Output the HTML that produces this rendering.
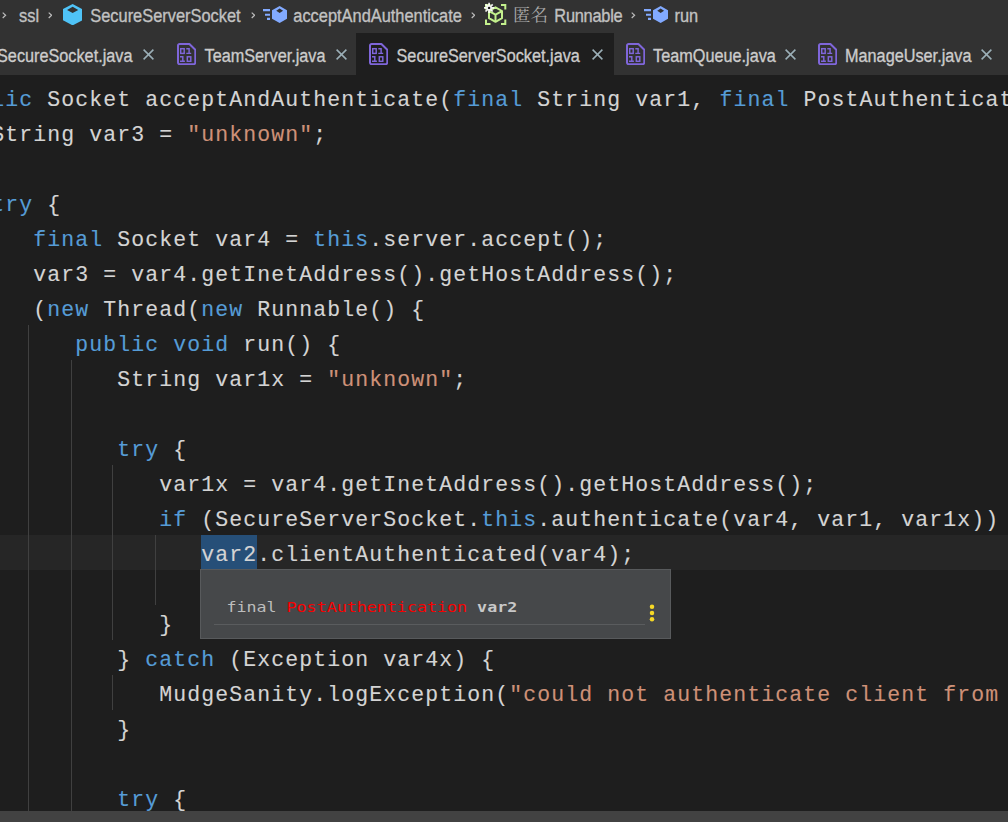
<!DOCTYPE html>
<html lang="zh"><head><meta charset="utf-8"><title>SecureServerSocket.java</title>
<style>
html,body{margin:0;padding:0;background:#1e1e1e;}
body{width:1008px;height:822px;position:relative;overflow:hidden;font-family:"Liberation Sans","Noto Sans CJK SC",sans-serif;}
#top{position:absolute;left:0;top:0;width:1008px;height:75px;background:#323232;}
#active{position:absolute;left:356px;top:33px;width:258px;height:42px;background:#1e1e1e;}
.bt{-webkit-text-stroke:0.3px #c2c2c2;position:absolute;top:0px;height:33px;line-height:32px;font-size:16.4px;color:#c2c2c2;white-space:nowrap;transform:scaleY(1.1);transform-origin:0 21.5px;}
.cj{transform:none;-webkit-text-stroke:0;top:-1.3px;font-family:"Liberation Serif","Noto Serif CJK SC",serif;font-size:17.5px;color:#a9a9a9;}
.bi{position:absolute;}
.tt{-webkit-text-stroke:0.3px #cccccc;position:absolute;top:33.9px;height:42px;line-height:45px;font-size:16.25px;color:#cccccc;white-space:nowrap;transform:scaleY(1.1);transform-origin:0 28.5px;}
.fi{position:absolute;top:43.2px;}
.cx{position:absolute;top:49px;}
#ed{position:absolute;left:0;top:75px;width:1008px;height:736px;overflow:hidden;}
#cur{position:absolute;left:0;top:535px;width:1008px;height:35px;background:#262626;}
.ln{position:absolute;height:35px;line-height:35px;white-space:pre;color:#d4d4d4;font-family:"Liberation Mono",monospace;font-size:21.5px;letter-spacing:1.098px;-webkit-text-stroke:0.12px;}
.k{color:#569cd6;}
.s{color:#ce9178;}
#sel{position:absolute;left:201px;top:535px;width:56px;height:34px;background:#264f78;}
.g{position:absolute;width:1px;background:#404040;}
#sb{position:absolute;left:0;top:811px;width:1008px;height:11px;background:#424242;}
#pop{position:absolute;left:200px;top:569px;width:469px;height:67.5px;background:#46484a;border:1px solid #585a5c;}
#pop .tx{position:absolute;left:25.4px;top:25px;line-height:24px;font-family:"DejaVu Sans Mono",monospace;font-size:16.67px;white-space:pre;color:#bdbdbd;transform:scaleY(0.852);transform-origin:0 17.3px;}
#pop .r{color:#f80000;}
#pop b{color:#c8c8c8;}
#pop .hr{position:absolute;left:13px;top:54px;width:431px;height:1px;background:#5a5c5e;}
#pop .dots{position:absolute;left:447.5px;top:33.5px;}
</style></head><body>
<div id="top"><div id="active"></div>
<svg class="bi" style="left:2px;top:12.300px" width="4.500" height="6.600" viewBox="0 0 4.500 6.600"><path d="M0.700 0.600L3.600 3.300L0.700 6" stroke="#bdbdbd" stroke-width="1.200" fill="none"/></svg>
<span class="bt" style="left:19px">ssl</span>
<svg class="bi" style="left:47.5px;top:12.300px" width="4.500" height="6.600" viewBox="0 0 4.500 6.600"><path d="M0.700 0.600L3.600 3.300L0.700 6" stroke="#bdbdbd" stroke-width="1.200" fill="none"/></svg>
<svg class="bi" style="left:62.9px;top:3.8px" width="19.3" height="21.4" viewBox="0 0 19.3 21.4"><path d="M9.65 0L19.30 5.10V16.30L9.65 21.40L0 16.30V5.10ZM9.65 2.70L15.25 5.90L9.65 9.10L4.05 5.90Z" fill="#4fc3f7" fill-rule="evenodd"/></svg>
<span class="bt" style="left:90.3px">SecureServerSocket</span>
<svg class="bi" style="left:250.5px;top:12.300px" width="4.500" height="6.600" viewBox="0 0 4.500 6.600"><path d="M0.700 0.600L3.600 3.300L0.700 6" stroke="#bdbdbd" stroke-width="1.200" fill="none"/></svg>
<svg class="bi" style="left:262.9px;top:9px" width="7.2" height="11" viewBox="0 0 7.2 11"><path d="M0 1.100h7.200M2 5.700h5.200M4 9.900h3.200" stroke="#82aaff" stroke-width="2.100" fill="none"/></svg><svg class="bi" style="left:271.9px;top:6px" width="15.3" height="17" viewBox="0 0 15.3 17"><path d="M7.65 0L15.30 4.30V12.70L7.65 17.00L0 12.70V4.30ZM7.65 2.50L11.05 4.70L7.65 6.90L4.25 4.70Z" fill="#82aaff" fill-rule="evenodd"/></svg>
<span class="bt" style="left:293.3px">acceptAndAuthenticate</span>
<svg class="bi" style="left:470.7px;top:12.300px" width="4.500" height="6.600" viewBox="0 0 4.500 6.600"><path d="M0.700 0.600L3.600 3.300L0.700 6" stroke="#bdbdbd" stroke-width="1.200" fill="none"/></svg>
<svg class="bi" style="left:485px;top:4px;overflow:visible" width="21.300" height="21" viewBox="0 0 21.300 21"><g fill="none" stroke="#c3f08d" stroke-width="2"><path d="M1 5.500V1h4.500M16 1h4.300v4.500M20.300 15.500V20H16M5.500 20H1v-4.500"/><path d="M10.500 3.300L17 7v7.200l-6.500 3.600L4 14.200V7Z" stroke-linejoin="round"/><path d="M4 7l6.500 3.600L17 7M10.500 10.600v7.200"/></g><g stroke="#ffffff" stroke-width="1.700" fill="none" opacity="0.92"><path d="M4.100 -1.200v10.200M-1 3.900h10.200M0.500 0.300l7.200 7.200M7.700 0.300l-7.200 7.200"/></g><circle cx="4.100" cy="3.900" r="2.700" fill="#f0f0f0"/><circle cx="4.100" cy="3.900" r="1.200" fill="#1a1a1a"/></svg>
<span class="bt cj" style="left:513px">匿名</span>
<span class="bt" style="left:554.3px"><span style="letter-spacing:-0.25px">Runnable</span></span>
<svg class="bi" style="left:631px;top:12.300px" width="4.500" height="6.600" viewBox="0 0 4.500 6.600"><path d="M0.700 0.600L3.600 3.300L0.700 6" stroke="#bdbdbd" stroke-width="1.200" fill="none"/></svg>
<svg class="bi" style="left:643.8px;top:9px" width="7.2" height="11" viewBox="0 0 7.2 11"><path d="M0 1.100h7.200M2 5.700h5.200M4 9.900h3.200" stroke="#82aaff" stroke-width="2.100" fill="none"/></svg><svg class="bi" style="left:652.8px;top:6px" width="15.3" height="17" viewBox="0 0 15.3 17"><path d="M7.65 0L15.30 4.30V12.70L7.65 17.00L0 12.70V4.30ZM7.65 2.50L11.05 4.70L7.65 6.90L4.25 4.70Z" fill="#82aaff" fill-rule="evenodd"/></svg>
<span class="bt" style="left:674.5px">run</span>
<svg class="fi" style="left:177px" width="19.3" height="22.2" viewBox="0 0 19.3 22.2"><path d="M2.600 1h9.800l5.900 5.700v12.900a1.600 1.600 0 0 1-1.600 1.600H2.600A1.600 1.600 0 0 1 1 19.600V2.600A1.600 1.600 0 0 1 2.600 1z" fill="none" stroke="#7f66da" stroke-width="2" stroke-linejoin="round"/><g fill="none" stroke="#7f66da" stroke-width="1.450"><rect x="3.700" y="5.700" width="3.500" height="4.700"/><rect x="10.300" y="13.800" width="3.500" height="4.500"/><path d="M9.300 5.700h2.800v4.700M9.300 10.400h4.900M3 13.800h2.800v4.500M3 18.300h4.900"/></g></svg><span class="tt" style="left:204.500px">TeamServer.java</span><svg class="cx" style="left:336px" width="11" height="11" viewBox="0 0 11 11"><path d="M0.600 0.600l9.800 9.800M10.400 0.600l-9.800 9.800" stroke="#9bafb7" stroke-width="1.500" fill="none"/></svg>
<svg class="fi" style="left:369px" width="19.3" height="22.2" viewBox="0 0 19.3 22.2"><path d="M2.600 1h9.800l5.900 5.700v12.900a1.600 1.600 0 0 1-1.600 1.600H2.600A1.600 1.600 0 0 1 1 19.600V2.600A1.600 1.600 0 0 1 2.600 1z" fill="none" stroke="#7f66da" stroke-width="2" stroke-linejoin="round"/><g fill="none" stroke="#7f66da" stroke-width="1.450"><rect x="3.700" y="5.700" width="3.500" height="4.700"/><rect x="10.300" y="13.800" width="3.500" height="4.500"/><path d="M9.300 5.700h2.800v4.700M9.300 10.400h4.900M3 13.800h2.800v4.500M3 18.300h4.900"/></g></svg><span class="tt" style="left:396.500px">SecureServerSocket.java</span><svg class="cx" style="left:592px" width="11" height="11" viewBox="0 0 11 11"><path d="M0.600 0.600l9.800 9.800M10.400 0.600l-9.800 9.800" stroke="#9bafb7" stroke-width="1.500" fill="none"/></svg>
<svg class="fi" style="left:626px" width="19.3" height="22.2" viewBox="0 0 19.3 22.2"><path d="M2.600 1h9.800l5.900 5.700v12.900a1.600 1.600 0 0 1-1.600 1.600H2.600A1.600 1.600 0 0 1 1 19.600V2.600A1.600 1.600 0 0 1 2.600 1z" fill="none" stroke="#7f66da" stroke-width="2" stroke-linejoin="round"/><g fill="none" stroke="#7f66da" stroke-width="1.450"><rect x="3.700" y="5.700" width="3.500" height="4.700"/><rect x="10.300" y="13.800" width="3.500" height="4.500"/><path d="M9.300 5.700h2.800v4.700M9.300 10.400h4.900M3 13.800h2.800v4.500M3 18.300h4.900"/></g></svg><span class="tt" style="left:653px">TeamQueue.java</span><svg class="cx" style="left:785px" width="11" height="11" viewBox="0 0 11 11"><path d="M0.600 0.600l9.800 9.800M10.400 0.600l-9.800 9.800" stroke="#9bafb7" stroke-width="1.500" fill="none"/></svg>
<svg class="fi" style="left:818px" width="19.3" height="22.2" viewBox="0 0 19.3 22.2"><path d="M2.600 1h9.800l5.900 5.700v12.900a1.600 1.600 0 0 1-1.600 1.600H2.600A1.600 1.600 0 0 1 1 19.600V2.600A1.600 1.600 0 0 1 2.600 1z" fill="none" stroke="#7f66da" stroke-width="2" stroke-linejoin="round"/><g fill="none" stroke="#7f66da" stroke-width="1.450"><rect x="3.700" y="5.700" width="3.500" height="4.700"/><rect x="10.300" y="13.800" width="3.500" height="4.500"/><path d="M9.300 5.700h2.800v4.700M9.300 10.400h4.900M3 13.800h2.800v4.500M3 18.300h4.900"/></g></svg><span class="tt" style="left:845px">ManageUser.java</span><svg class="cx" style="left:981px" width="11" height="11" viewBox="0 0 11 11"><path d="M0.600 0.600l9.800 9.800M10.400 0.600l-9.800 9.800" stroke="#9bafb7" stroke-width="1.500" fill="none"/></svg>
<span class="tt" style="right:875.5px">SecureSocket.java</span><svg class="cx" style="left:143px" width="11" height="11" viewBox="0 0 11 11"><path d="M0.600 0.600l9.800 9.800M10.400 0.600l-9.800 9.800" stroke="#9bafb7" stroke-width="1.500" fill="none"/></svg>
</div>
<div id="cur"></div><div id="sel"></div>
<div class="g" style="left:28px;top:325px;height:486px"></div>
<div class="g" style="left:71px;top:360px;height:451px"></div>
<div class="g" style="left:112px;top:465px;height:175px"></div>
<div class="g" style="left:112px;top:675px;height:35px"></div>
<div class="g" style="left:155px;top:535px;height:70px"></div>
<div class="ln" style="top:83.1px;left:-50.7px"><span class="k">public</span> Socket acceptAndAuthenticate(<span class="k">final</span> String var1, <span class="k">final</span> PostAuthentication var2) {</div>
<div class="ln" style="top:118.1px;left:-8.7px">String var3 = <span class="s">&quot;unknown&quot;</span>;</div>
<div class="ln" style="top:188.1px;left:-8.7px"><span class="k">try</span> {</div>
<div class="ln" style="top:223.1px;left:33.3px"><span class="k">final</span> Socket var4 = <span class="k">this</span>.server.accept();</div>
<div class="ln" style="top:258.1px;left:33.3px">var3 = var4.getInetAddress().getHostAddress();</div>
<div class="ln" style="top:293.1px;left:33.3px">(<span class="k">new</span> Thread(<span class="k">new</span> Runnable() {</div>
<div class="ln" style="top:328.1px;left:75.3px"><span class="k">public</span> <span class="k">void</span> run() {</div>
<div class="ln" style="top:363.1px;left:117.3px">String var1x = <span class="s">&quot;unknown&quot;</span>;</div>
<div class="ln" style="top:433.1px;left:117.3px"><span class="k">try</span> {</div>
<div class="ln" style="top:468.1px;left:159.3px">var1x = var4.getInetAddress().getHostAddress();</div>
<div class="ln" style="top:503.1px;left:159.3px"><span class="k">if</span> (SecureServerSocket.<span class="k">this</span>.authenticate(var4, var1, var1x)) {</div>
<div class="ln" style="top:538.1px;left:201.3px">var2.clientAuthenticated(var4);</div>
<div class="ln" style="top:608.1px;left:159.3px">}</div>
<div class="ln" style="top:643.1px;left:117.3px">} <span class="k">catch</span> (Exception var4x) {</div>
<div class="ln" style="top:678.1px;left:159.3px">MudgeSanity.logException(<span class="s">&quot;could not authenticate client from &quot; + var1x</span></div>
<div class="ln" style="top:713.1px;left:117.3px">}</div>
<div class="ln" style="top:783.1px;left:117.3px"><span class="k">try</span> {</div>
<div id="pop"><div class="tx">final <span class="r">PostAuthentication</span> <b>var2</b></div><div class="hr"></div>
<svg class="dots" width="6" height="18" viewBox="0 0 6 18"><circle cx="3" cy="2.800" r="2.250" fill="#f7d926"/><circle cx="3" cy="9" r="2.250" fill="#f7d926"/><circle cx="3" cy="15.200" r="2.250" fill="#f7d926"/></svg></div>
<div id="sb"></div>
</body></html>
